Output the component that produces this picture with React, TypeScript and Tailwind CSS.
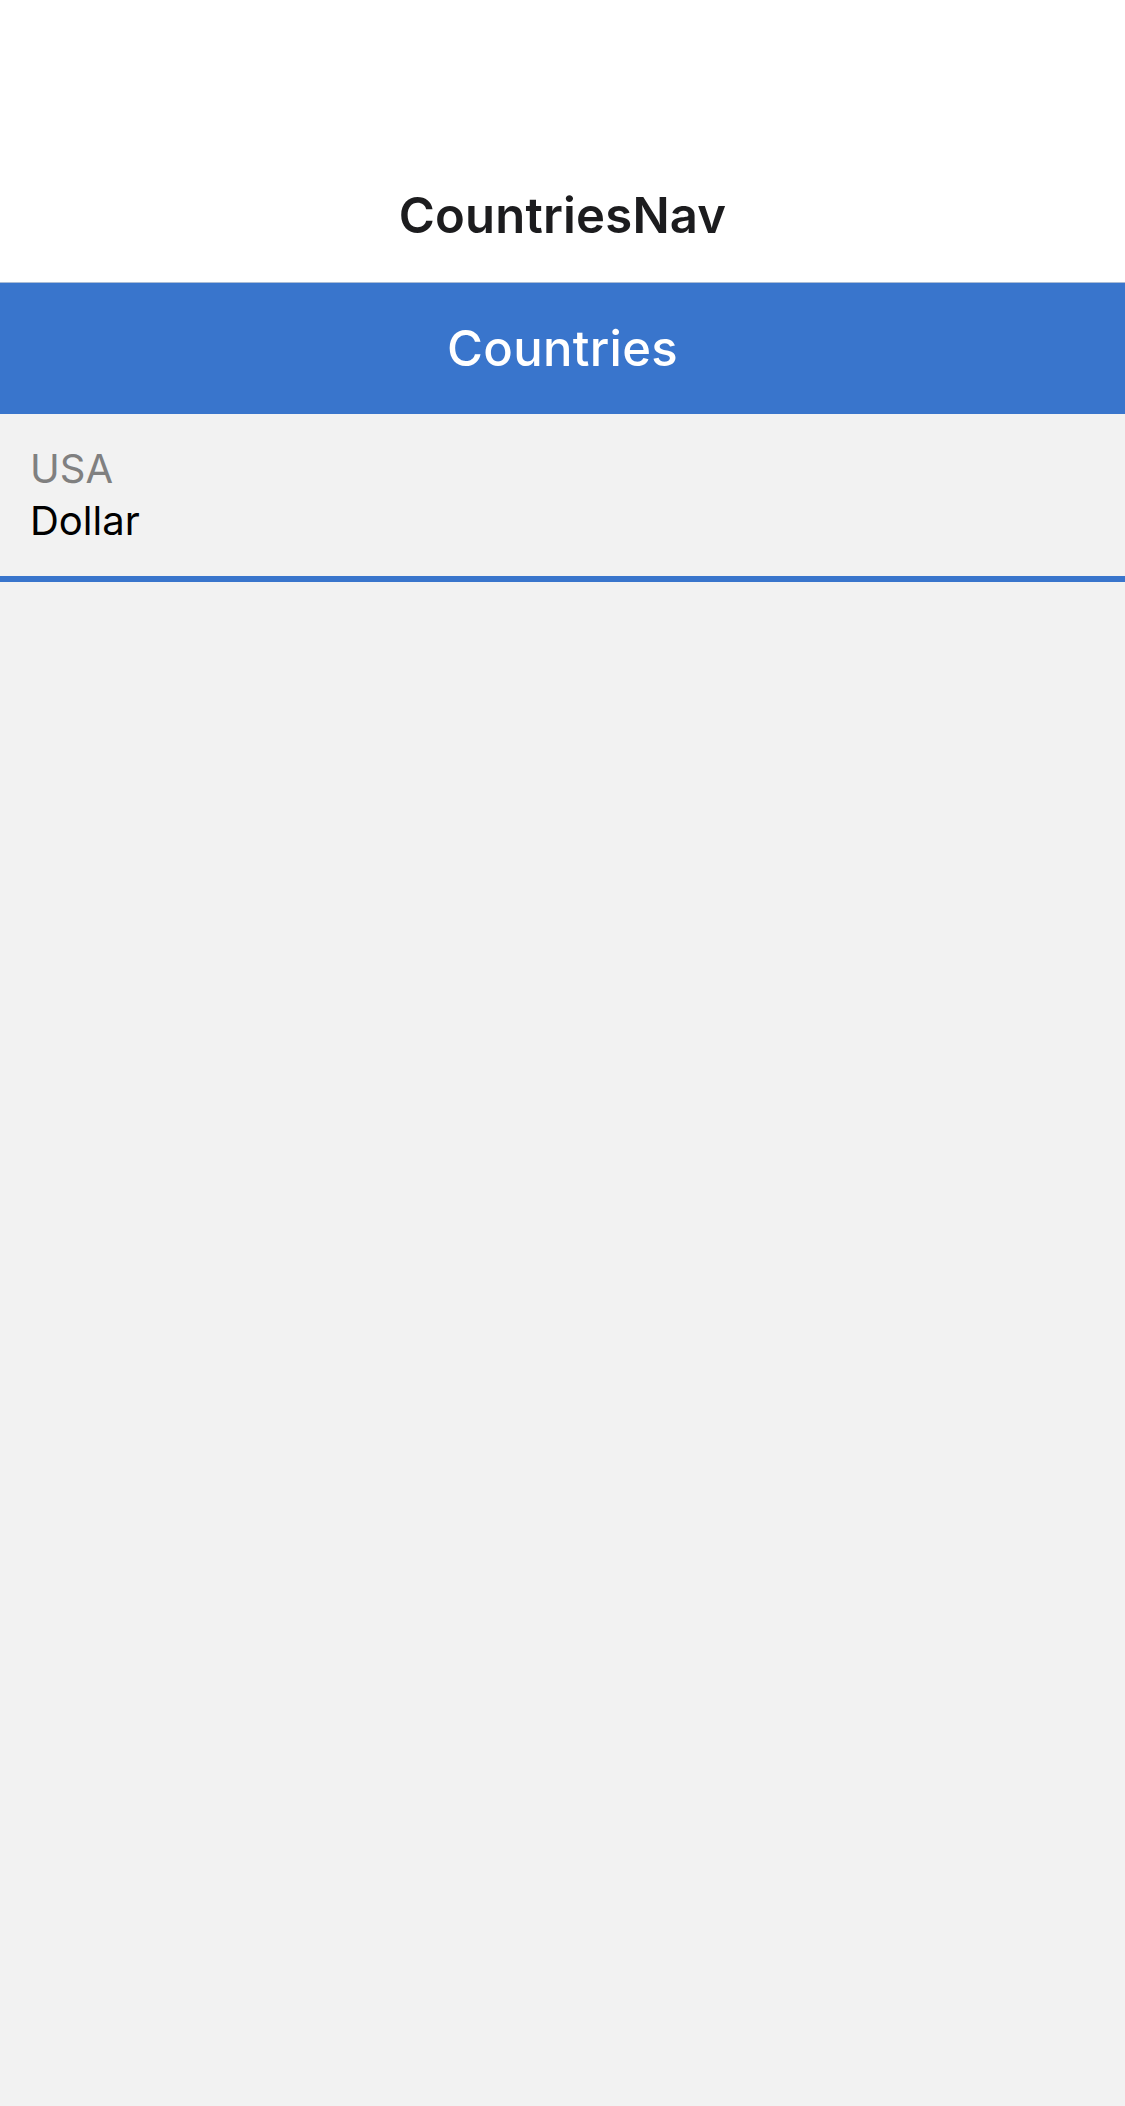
import React from "react";

export default function App() {
  return (
    <div
      className="min-h-[2106px] w-full bg-[#f2f2f2]"
      style={{ fontFamily: "Inter, 'Noto Sans', sans-serif" }}
    >
      <header className="h-[282px] bg-white flex items-end justify-center pb-[37px]">
        <h1 className="text-[49px] leading-[58px] font-semibold text-[#1c1c1e] tracking-[0.2px]">CountriesNav</h1>
      </header>
      <div className="h-[132px] bg-[#3975cc] flex items-center justify-center border-t border-[#a9bcd6]">
        <span className="text-[49px] leading-[58px] font-medium text-white tracking-[0.3px]">Countries</span>
      </div>
      <div className="h-[168px] flex flex-col pt-[29px] pl-[30px] border-b-[6px] border-[#3975cc]">
        <span className="text-[40px] leading-[52px] font-normal text-[#808080]">USA</span>
        <span className="text-[40px] leading-[52px] font-normal text-black">Dollar</span>
      </div>
    </div>
  );
}
